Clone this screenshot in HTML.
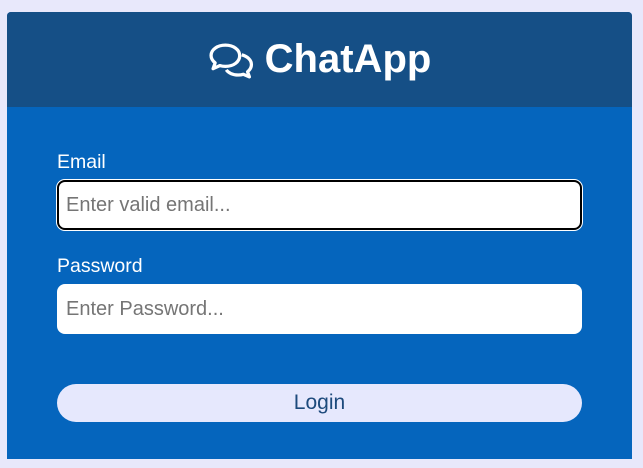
<!DOCTYPE html>
<html><head><style>
html,body{margin:0;padding:0;background:#e8e8fb;width:643px;height:468px;overflow:hidden;font-family:"Liberation Sans",Arial,sans-serif}
.card{position:absolute;left:7px;top:12px;width:625px;height:447px;background:#0565bd;border-radius:4px 4px 0 0;overflow:hidden}
.hdr{height:95px;background:#154f86;display:flex;align-items:center;justify-content:center;color:#fff;font-weight:bold;font-size:40px}
.hdr svg{margin-right:10px;margin-top:2px}
.lbl{position:absolute;left:50px;color:#fff;font-size:19.5px}
.inp{position:absolute;left:50px;width:525px;height:50px;background:#fff;border-radius:8px;box-sizing:border-box;padding-left:9px;color:#757575;font-size:20px;line-height:50px}
.btn{position:absolute;left:50px;top:372px;width:525px;height:38px;background:#e6e8fd;border-radius:19px;text-align:center;line-height:38px;font-size:21px;color:#1d4a7c}
</style></head><body>
<div class="card">
<div class="hdr"><svg width="47" height="37" viewBox="0 0 46 36" fill="none" stroke="#fff" stroke-width="3.2" stroke-linejoin="round">
<path d="M17 3C9 3 3 7.5 3 13c0 3 1.6 5.5 4 7.3L5 26l6.5-3c1.7.5 3.6.8 5.5.8 8 0 14-4.5 14-10.4S25 3 17 3z"/>
<path d="M33 12.5c5.5 1.3 9.5 5 9.5 9.5 0 2.8-1.5 5.2-3.8 7l1.8 5-6-2.5c-1.6.5-3.300.7-5 .7-5.2 0-9.6-2-11.600-5"/>
</svg>ChatApp</div>
<div class="lbl" style="top:139px">Email</div>
<div class="inp" style="top:168px;border:2px solid #000;box-shadow:0 0 0 1px #fff;padding-left:7px;line-height:46px">Enter valid email...</div>
<div class="lbl" style="top:243px">Password</div>
<div class="inp" style="top:272px">Enter Password...</div>
<div class="btn">Login</div>
</div>
</body></html>
